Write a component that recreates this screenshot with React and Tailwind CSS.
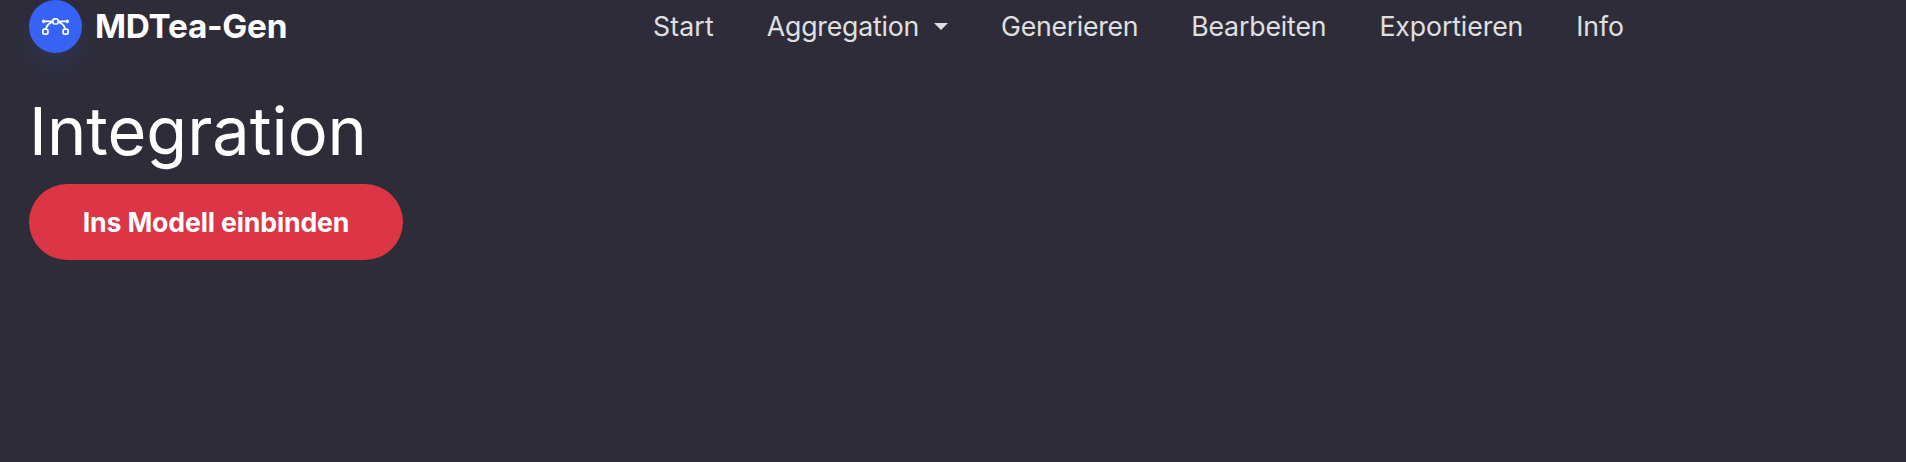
const links = [
  { label: 'Generieren', tracking: 'tracking-[-0.3px]' },
  { label: 'Bearbeiten', tracking: 'tracking-[-0.15px]' },
  { label: 'Exportieren', tracking: 'tracking-[-0.1px]' },
  { label: 'Info', tracking: 'tracking-[-0.1px]' },
];

function Logo() {
  return (
    <span className="flex size-[53px] shrink-0 items-center justify-center rounded-full bg-[#3763f4] shadow-[0_13px_27px_rgba(55,99,244,0.15)]">
      <svg width="27" height="27" viewBox="0 0 16 16" fill="white" fillRule="evenodd">
        <path d="M0 10.5A1.5 1.5 0 0 1 1.5 9h1A1.5 1.5 0 0 1 4 10.5v1A1.5 1.5 0 0 1 2.5 13h-1A1.5 1.5 0 0 1 0 11.5v-1zm1.5-.5a.5.5 0 0 0-.5.5v1a.5.5 0 0 0 .5.5h1a.5.5 0 0 0 .5-.5v-1a.5.5 0 0 0-.5-.5h-1zm10.5.5A1.5 1.5 0 0 1 13.5 9h1a1.5 1.5 0 0 1 1.5 1.5v1a1.5 1.5 0 0 1-1.5 1.5h-1a1.5 1.5 0 0 1-1.5-1.5v-1zm1.5-.5a.5.5 0 0 0-.5.5v1a.5.5 0 0 0 .5.5h1a.5.5 0 0 0 .5-.5v-1a.5.5 0 0 0-.5-.5h-1zM6 4.5A1.5 1.5 0 0 1 7.5 3h1A1.5 1.5 0 0 1 10 4.5v1A1.5 1.5 0 0 1 8.5 7h-1A1.5 1.5 0 0 1 6 5.5v-1zM7.5 4a.5.5 0 0 0-.5.5v1a.5.5 0 0 0 .5.5h1a.5.5 0 0 0 .5-.5v-1a.5.5 0 0 0-.5-.5h-1z" />
        <path d="M6 4.5H1.866a1 1 0 1 0 0 1h2.668A6.517 6.517 0 0 0 1.814 9H2.5c.123 0 .244.015.358.043a5.517 5.517 0 0 1 3.185-3.185A1.503 1.503 0 0 1 6 5.5v-1zm3.957 1.358A1.5 1.5 0 0 0 10 5.5v-1h4.134a1 1 0 1 1 0 1h-2.668a6.517 6.517 0 0 1 2.72 3.5H13.5c-.123 0-.243.015-.358.043a5.517 5.517 0 0 0-3.185-3.185z" />
      </svg>
    </span>
  );
}

export default function App() {
  return (
    <div className="min-h-screen bg-[#2e2c38] px-[29px] font-['Inter',sans-serif] text-white">
      <nav className="flex h-[53px] items-center">
        <a className="flex w-[624px] items-center gap-[13px]">
          <Logo />
          <span className="text-[33.33px] font-bold leading-[51px] tracking-[-0.25px]">MDTea-Gen</span>
        </a>
        <div className="flex items-center gap-[53px] pb-[2px] text-[26.67px] text-white/85">
          <a className="tracking-[0.15px]">Start</a>
          <a className="flex items-center tracking-[-0.2px]">
            Aggregation
            <span className="ml-[15px] mt-[2px] border-x-[7px] border-t-[7px] border-x-transparent border-t-white/85" />
          </a>
          {links.map(({ label, tracking }) => (
            <a key={label} className={tracking}>{label}</a>
          ))}
        </div>
      </nav>
      <h1 className="mt-[38px] text-[66.67px] font-normal leading-[80px]">Integration</h1>
      <button className="mt-[13px] block h-[76px] w-[374px] rounded-full bg-[#dc3545] text-[26.67px] font-bold tracking-[-0.15px]">
        Ins Modell einbinden
      </button>
    </div>
  );
}
